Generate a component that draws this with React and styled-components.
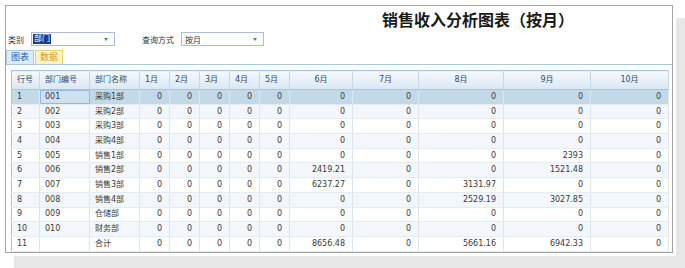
import styled, { createGlobalStyle } from "styled-components";

const GlobalStyle = createGlobalStyle`
  body {
    margin: 0;
    background: #ffffff;
    font-family: "DejaVu Sans", "Noto Sans CJK SC", sans-serif;
  }
`;

const months = ["1月", "2月", "3月", "4月", "5月", "6月", "7月", "8月", "9月", "10月"];
const widths = [28, 50, 50, 30, 30, 30, 30, 30, 63, 66, 85, 87, 78];

const rows = [
  ["1", "001", "采购1部", [0, 0, 0, 0, 0, 0, 0, 0, 0, 0]],
  ["2", "002", "采购2部", [0, 0, 0, 0, 0, 0, 0, 0, 0, 0]],
  ["3", "003", "采购3部", [0, 0, 0, 0, 0, 0, 0, 0, 0, 0]],
  ["4", "004", "采购4部", [0, 0, 0, 0, 0, 0, 0, 0, 0, 0]],
  ["5", "005", "销售1部", [0, 0, 0, 0, 0, 0, 0, 0, 2393, 0]],
  ["6", "006", "销售2部", [0, 0, 0, 0, 0, "2419.21", 0, 0, "1521.48", 0]],
  ["7", "007", "销售3部", [0, 0, 0, 0, 0, "6237.27", 0, "3131.97", 0, 0]],
  ["8", "008", "销售4部", [0, 0, 0, 0, 0, 0, 0, "2529.19", "3027.85", 0]],
  ["9", "009", "仓储部", [0, 0, 0, 0, 0, 0, 0, 0, 0, 0]],
  ["10", "010", "财务部", [0, 0, 0, 0, 0, 0, 0, 0, 0, 0]],
  ["11", "", "合计", [0, 0, 0, 0, 0, "8656.48", 0, "5661.16", "6942.33", 0]],
];

const App = () => {
  return (
    <>
      <GlobalStyle />
      <Page>
        <Panel>
          <TitleBar>
            <Title>销售收入分析图表（按月）</Title>
          </TitleBar>
          <FilterRow>
            <Label>类别</Label>
            <Combo $width={84}>
              <Selected>部门</Selected>
              <Arrow />
            </Combo>
            <Label $gap={27}>查询方式</Label>
            <Combo $width={83}>
              <ComboText>按月</ComboText>
              <Arrow />
            </Combo>
          </FilterRow>
          <TabStrip>
            <Tab>图表</Tab>
            <Tab $active>数据</Tab>
          </TabStrip>
          <Grid>
            <colgroup>
              {widths.map((w, i) => (
                <col key={i} style={{ width: w }} />
              ))}
            </colgroup>
            <thead>
              <tr>
                <HeadCell>行号</HeadCell>
                <HeadCell>部门编号</HeadCell>
                <HeadCell>部门名称</HeadCell>
                {months.map((m, i) => (
                  <HeadCell key={m} $center={i >= 5}>
                    {m}
                  </HeadCell>
                ))}
              </tr>
            </thead>
            <tbody>
              {rows.map(([no, code, name, vals], r) => (
                <Row key={no} $selected={r === 0} $even={r % 2 === 1}>
                  <Cell>{no}</Cell>
                  <Cell $focus={r === 0}>{code}</Cell>
                  <Cell>{name}</Cell>
                  {vals.map((v, i) => (
                    <Cell key={i} $right>
                      {v}
                    </Cell>
                  ))}
                </Row>
              ))}
            </tbody>
          </Grid>
        </Panel>
      </Page>
    </>
  );
};

export default App;

const Page = styled.div`
  min-height: 268px;
  box-sizing: border-box;
  padding: 5px 0 0 5px;
`;

const Panel = styled.div`
  box-sizing: border-box;
  width: 668px;
  height: 248px;
  border: 1px solid #a2a2a2;
  background: #ffffff;
  box-shadow: 0 0 0 3px #ffffff, 12px 16px 0 3px #e7e7e7;
  display: flex;
  flex-direction: column;
`;

const TitleBar = styled.div`
  height: 26px;
  display: flex;
  align-items: center;
  padding-left: 376px;
`;

const Title = styled.h1`
  margin: 0;
  font-size: 16px;
  font-weight: bold;
  color: #1a1a1a;
  font-family: "Noto Sans CJK SC", sans-serif;
  line-height: 20px;
`;

const FilterRow = styled.div`
  height: 14px;
  display: flex;
  align-items: center;
  padding-left: 2px;
`;

const Label = styled.span`
  font-size: 8px;
  color: #333333;
  margin-left: ${(p) => p.$gap || 0}px;
  margin-right: 7px;
`;

const Combo = styled.div`
  box-sizing: border-box;
  width: ${(p) => p.$width}px;
  height: 14px;
  border: 1px solid #a9bed6;
  background: #ffffff;
  display: flex;
  align-items: center;
  padding-left: 1px;
  position: relative;
`;

const Selected = styled.span`
  background: #1d3b8c;
  color: #ffffff;
  font-size: 8px;
  line-height: 10px;
  padding: 0 1px;
`;

const ComboText = styled.span`
  font-size: 8px;
  color: #333333;
  padding-left: 2px;
`;

const Arrow = styled.span`
  position: absolute;
  right: 6px;
  top: 5px;
  border-left: 2px solid transparent;
  border-right: 2px solid transparent;
  border-top: 3px solid #5a7898;
`;

const TabStrip = styled.div`
  margin-top: 4px;
  height: 14px;
  display: flex;
  gap: 1px;
  border-bottom: 1px solid #a8c8e2;
`;

const Tab = styled.div`
  box-sizing: border-box;
  height: 14px;
  padding: 0 4px;
  font-size: 9px;
  line-height: 12px;
  border: 1px solid ${(p) => (p.$active ? "#e9cf7a" : "#a8c8e2")};
  border-bottom: none;
  background: ${(p) => (p.$active ? "#fdf3c4" : "#dcebf7")};
  color: ${(p) => (p.$active ? "#d39a2c" : "#2262b4")};
`;

const Grid = styled.table`
  margin: 5px 0 0 5px;
  width: 657px;
  table-layout: fixed;
  border-collapse: collapse;
  border: 1px solid #a9c4dc;
  font-size: 8px;
  line-height: 10px;
`;

const HeadCell = styled.th`
  height: 18px;
  padding: 0 ${(p) => (p.$center ? "0" : "5px")};
  text-align: ${(p) => (p.$center ? "center" : "left")};
  font-weight: normal;
  white-space: nowrap;
  color: #2d4b6b;
  background: linear-gradient(#f5f9fd, #d9e7f3);
  border-right: 1px solid #c3d8ea;
  border-bottom: 1px solid #a9c4dc;
`;

const Row = styled.tr`
  background: ${(p) => (p.$selected ? "#c4d9e8" : p.$even ? "#f3f7fb" : "#ffffff")};
`;

const Cell = styled.td`
  box-sizing: border-box;
  height: 14.7px;
  padding: 0 ${(p) => (p.$right ? "7px" : "5px")};
  vertical-align: middle;
  text-align: ${(p) => (p.$right ? "right" : "left")};
  color: #3a3a3a;
  white-space: nowrap;
  border-right: 1px solid #d9e7f3;
  border-bottom: 1px solid #e3edf6;
  outline: ${(p) => (p.$focus ? "1px solid #8fbbe0" : "none")};
  outline-offset: -1px;
  background: ${(p) => (p.$focus ? "#cfe1ee" : "transparent")};
`;
